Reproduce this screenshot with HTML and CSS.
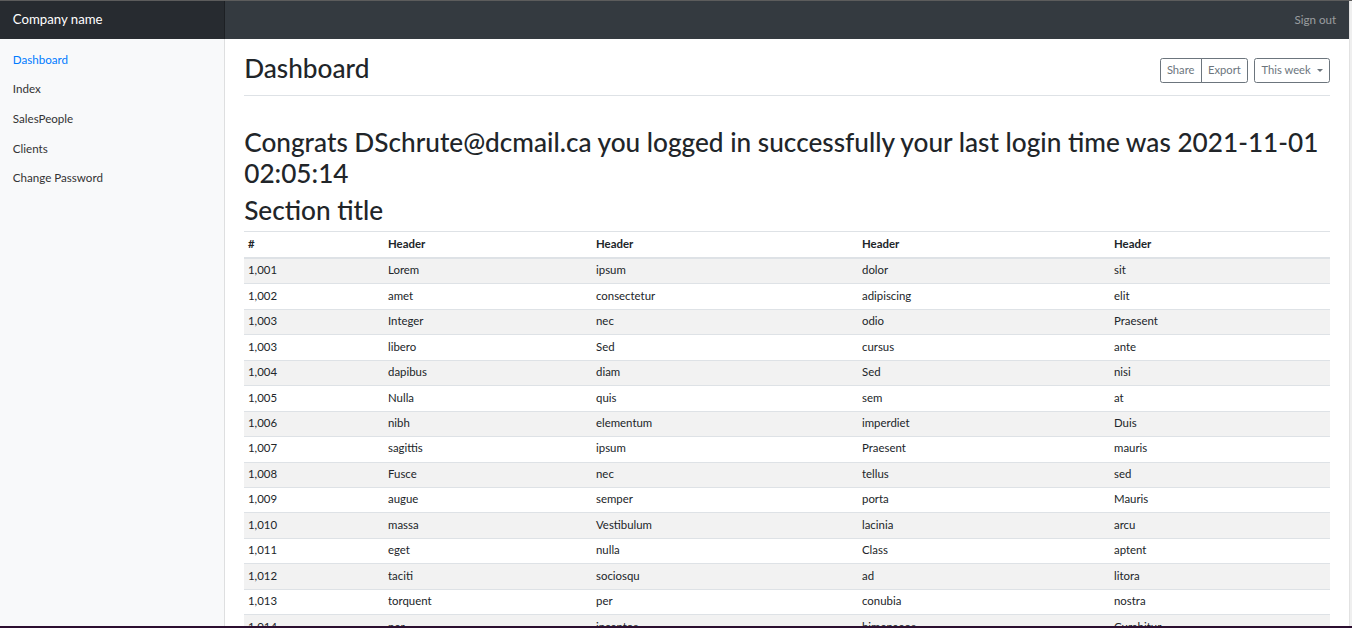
FILE: index.html
```html
<!DOCTYPE html>
<html lang="en">
<head>
<meta charset="utf-8">
<title>Dashboard</title>
<link rel="stylesheet" href="styles.css">
</head>
<body>
<div class="window">
  <div class="app">
    <div class="page">
      <nav class="navbar">
        <a class="brand" href="#">Company name</a>
        <a class="signout" href="#">Sign out</a>
      </nav>
      <div class="layout">
        <aside class="sidebar">
          <ul class="nav">
            <li><a class="nav-link active" href="#">Dashboard</a></li>
            <li><a class="nav-link" href="#">Index</a></li>
            <li><a class="nav-link" href="#">SalesPeople</a></li>
            <li><a class="nav-link" href="#">Clients</a></li>
            <li><a class="nav-link" href="#">Change Password</a></li>
          </ul>
        </aside>
        <main class="main">
          <div class="page-head">
            <h1 class="title">Dashboard</h1>
            <div class="toolbar">
              <div class="btn-group">
                <button class="btn">Share</button>
                <button class="btn">Export</button>
              </div>
              <button class="btn dropdown">This week</button>
            </div>
          </div>
          <h2 class="congrats">Congrats DSchrute@dcmail.ca you logged in successfully your last login time was 2021&#8209;11&#8209;01 02:05:14</h2>
          <h2 class="section">Section title</h2>
          <table class="table">
            <colgroup>
              <col class="c1"><col class="c2"><col class="c3"><col class="c4"><col class="c5">
            </colgroup>
            <thead>
              <tr><th>#</th><th>Header</th><th>Header</th><th>Header</th><th>Header</th></tr>
            </thead>
            <tbody>
              <tr><td>1,001</td><td>Lorem</td><td>ipsum</td><td>dolor</td><td>sit</td></tr>
              <tr><td>1,002</td><td>amet</td><td>consectetur</td><td>adipiscing</td><td>elit</td></tr>
              <tr><td>1,003</td><td>Integer</td><td>nec</td><td>odio</td><td>Praesent</td></tr>
              <tr><td>1,003</td><td>libero</td><td>Sed</td><td>cursus</td><td>ante</td></tr>
              <tr><td>1,004</td><td>dapibus</td><td>diam</td><td>Sed</td><td>nisi</td></tr>
              <tr><td>1,005</td><td>Nulla</td><td>quis</td><td>sem</td><td>at</td></tr>
              <tr><td>1,006</td><td>nibh</td><td>elementum</td><td>imperdiet</td><td>Duis</td></tr>
              <tr><td>1,007</td><td>sagittis</td><td>ipsum</td><td>Praesent</td><td>mauris</td></tr>
              <tr><td>1,008</td><td>Fusce</td><td>nec</td><td>tellus</td><td>sed</td></tr>
              <tr><td>1,009</td><td>augue</td><td>semper</td><td>porta</td><td>Mauris</td></tr>
              <tr><td>1,010</td><td>massa</td><td>Vestibulum</td><td>lacinia</td><td>arcu</td></tr>
              <tr><td>1,011</td><td>eget</td><td>nulla</td><td>Class</td><td>aptent</td></tr>
              <tr><td>1,012</td><td>taciti</td><td>sociosqu</td><td>ad</td><td>litora</td></tr>
              <tr><td>1,013</td><td>torquent</td><td>per</td><td>conubia</td><td>nostra</td></tr>
              <tr><td>1,014</td><td>per</td><td>inceptos</td><td>himenaeos</td><td>Curabitur</td></tr>
              <tr><td>1,015</td><td>sodales</td><td>ligula</td><td>in</td><td>libero</td></tr>
            </tbody>
          </table>
        </main>
      </div>
    </div>
    <div class="scrollbar"></div>
  </div>
</div>
</body>
</html>
```

FILE: styles.css
```css
* { box-sizing: border-box; }

html, body {
  margin: 0;
  padding: 0;
  height: 628px;
  overflow: hidden;
}

body {
  font-family: Lato, "Noto Sans", "Liberation Sans", sans-serif;
  font-size: 11.2px;
  line-height: 1.5;
  color: #212529;
  background: #ffffff;
}

.window {
  height: 628px;
  display: flex;
  flex-direction: column;
  border-top: 1px solid #5c5c5c;
  border-bottom: 2px solid #2c0f30;
}

.app {
  flex: 1;
  display: flex;
  min-height: 0;
  overflow: hidden;
}

.page {
  flex: 1;
  min-width: 0;
  display: flex;
  flex-direction: column;
}

.scrollbar {
  width: 3px;
  background: #efefef;
  border-left: 1px solid #e2e2e2;
}

/* navbar */
.navbar {
  display: flex;
  justify-content: space-between;
  align-items: center;
  height: 38px;
  background: #343a40;
  flex-shrink: 0;
}

.brand {
  width: 225px;
  height: 100%;
  display: flex;
  align-items: center;
  padding: 0 12.8px;
  background: #272b30;
  box-shadow: inset -1px 0 0 rgba(0, 0, 0, .25);
  color: #ffffff;
  font-size: 13.2px;
  text-decoration: none;
}

.signout {
  padding: 0 12.8px;
  color: rgba(255, 255, 255, .5);
  text-decoration: none;
  font-size: 11.6px;
}

/* layout */
.layout {
  flex: 1;
  display: flex;
  min-height: 0;
}

.sidebar {
  width: 225px;
  flex-shrink: 0;
  background: #f8f9fa;
  box-shadow: inset -1px 0 0 rgba(0, 0, 0, .1);
  padding-top: 6.4px;
}

.nav {
  list-style: none;
  margin: 0;
  padding: 0;
}

.nav-link {
  display: block;
  padding: 6.4px 12.8px;
  color: #333333;
  text-decoration: none;
  font-size: 11.6px;
  line-height: 16.8px;
}

.nav-link.active {
  color: #007bff;
}

.main {
  flex: 1;
  min-width: 0;
  padding: 12.8px 19.2px 0;
  overflow: hidden;
}

.page-head {
  display: flex;
  justify-content: space-between;
  align-items: center;
  padding-bottom: 6.4px;
  margin-bottom: 31px;
  border-bottom: 1px solid #dee2e6;
}

.title {
  margin: 1.5px 0 4.9px;
  font-size: 26.2px;
  font-weight: 500;
  line-height: 30.72px;
}

.toolbar {
  display: flex;
  gap: 6.4px;
  margin-bottom: 0;
}

.btn-group {
  display: flex;
}

.btn {
  font-family: inherit;
  font-size: 11.2px;
  line-height: 1.5;
  color: #6c757d;
  background: transparent;
  border: 0.8px solid #6c757d;
  border-radius: 2.6px;
  padding: 3.2px 6.2px;
  height: 24.8px;
  cursor: pointer;
}

.btn-group .btn:first-child {
  border-top-right-radius: 0;
  border-bottom-right-radius: 0;
}

.btn-group .btn:last-child {
  border-top-left-radius: 0;
  border-bottom-left-radius: 0;
  margin-left: -0.8px;
}

.dropdown::after {
  content: "";
  display: inline-block;
  margin-left: 6px;
  vertical-align: 2px;
  border-top: 3.4px solid;
  border-right: 3.4px solid transparent;
  border-left: 3.4px solid transparent;
}

.congrats {
  margin: 0 0 6.4px;
  font-size: 26.2px;
  font-weight: 500;
  line-height: 30.72px;
}

.section {
  margin: 0 0 5.6px;
  font-size: 26.2px;
  font-weight: 500;
  line-height: 30.72px;
}

/* table */
.table {
  width: 100%;
  border-collapse: collapse;
  table-layout: fixed;
  font-size: 11.4px;
}

.c1 { width: 140px; }
.c2 { width: 208px; }
.c3 { width: 266px; }
.c4 { width: 252px; }
.c5 { width: auto; }

.table th,
.table td {
  padding: 3.4px 3.84px 4.28px;
  text-align: left;
  vertical-align: top;
  border-top: 1px solid #dee2e6;
  white-space: nowrap;
  line-height: 16.8px;
}

.table th {
  font-weight: 700;
  border-bottom: 2px solid #dee2e6;
}

.table tbody tr:nth-child(odd) {
  background: rgba(0, 0, 0, .05);
}
```
